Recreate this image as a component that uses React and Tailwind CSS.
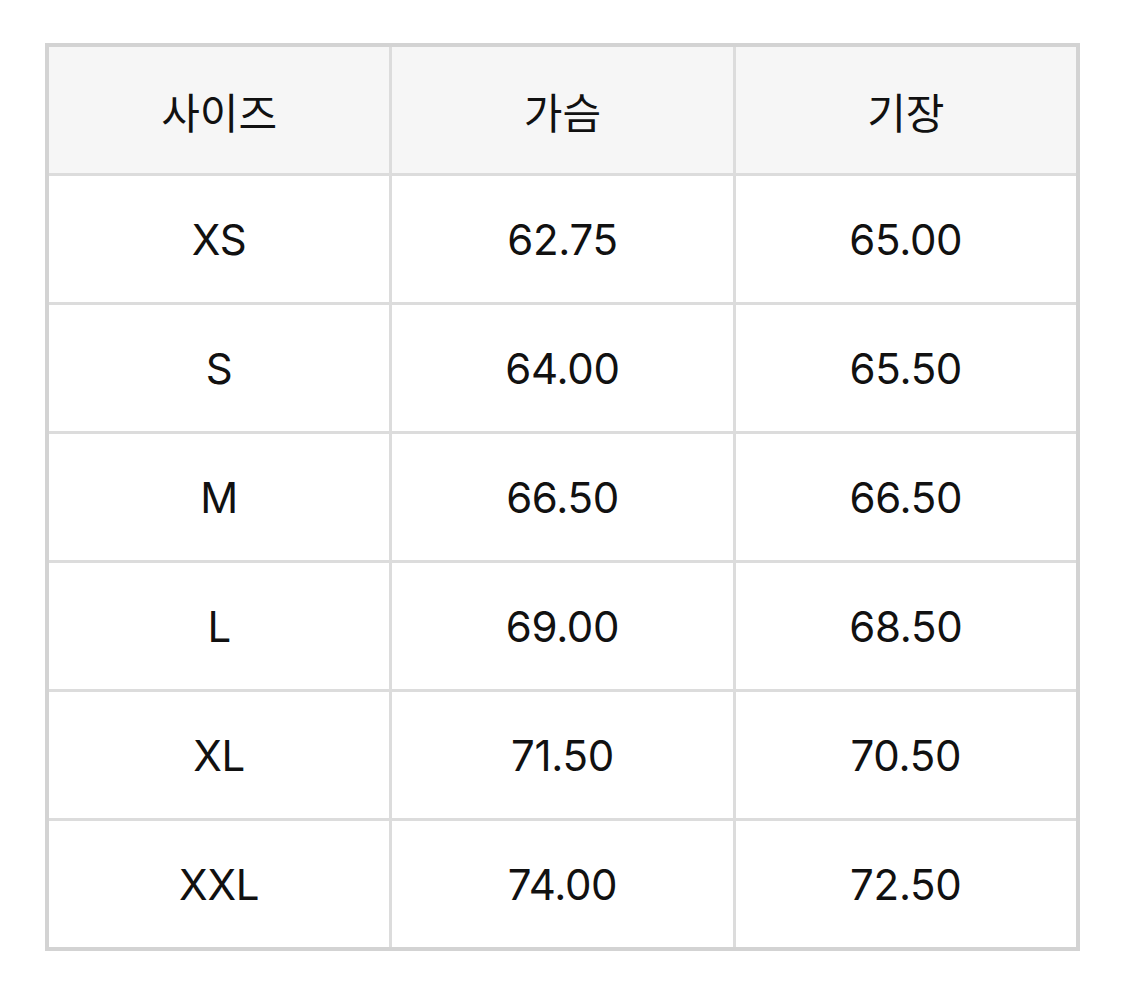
const rows = [
  ['XS', '62.75', '65.00'],
  ['S', '64.00', '65.50'],
  ['M', '66.50', '66.50'],
  ['L', '69.00', '68.50'],
  ['XL', '71.50', '70.50'],
  ['XXL', '74.00', '72.50'],
];

export default function App() {
  return (
    <div
      className="w-[1125px] h-[982px] bg-white pt-[43px] pl-[45px]"
      style={{ fontFamily: 'Inter, "Noto Sans CJK KR", sans-serif' }}
    >
      <div className="w-[1035px] border-[4px] border-[#d3d3d3]">
        <div className="grid grid-cols-3 gap-[3px] bg-[#dcdcdc]">
          {['사이즈', '가슴', '기장'].map((h) => (
            <div
              key={h}
              className="h-[126px] flex items-center justify-center bg-[#f6f6f6] text-[42px] text-[#111]"
              style={{ fontFamily: '"Noto Sans CJK KR", sans-serif' }}
            >
              {h}
            </div>
          ))}
          {rows.map((r) =>
            r.map((c, i) => (
              <div
                key={r[0] + i}
                className="h-[126px] flex items-center justify-center bg-white text-[42px] tracking-[-0.3px] text-[#111]"
              >
                {c}
              </div>
            ))
          )}
        </div>
      </div>
    </div>
  );
}
